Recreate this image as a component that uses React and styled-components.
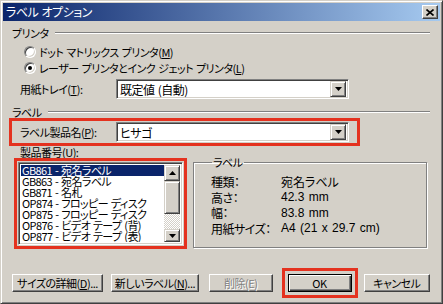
import { Fragment } from 'react';
import styled, { createGlobalStyle } from 'styled-components';

const GlobalStyle = createGlobalStyle`
  html, body {
    margin: 0;
    padding: 0;
    background: #d4d0c8;
  }
  body {
    font-family: "Noto Sans CJK JP", "Liberation Sans", sans-serif;
    font-size: 11px;
    letter-spacing: -0.5px;
    word-spacing: 1px;
    font-feature-settings: "palt";
    color: #000;
  }
`;

const RED = '#e4321f';

const Window = styled.div`
  width: 443px;
  height: 304px;
  box-sizing: border-box;
  background: #d4d0c8;
  border: 1px solid;
  border-color: #d4d0c8 #404040 #404040 #d4d0c8;
  box-shadow: inset 1px 1px #fff, inset -1px -1px #808080;
  padding: 2px;
  display: flex;
  flex-direction: column;
  overflow: hidden;
`;

const TitleBar = styled.div`
  height: 18px;
  flex: none;
  background: linear-gradient(to right, #0a246a, #a6caf0);
  display: flex;
  align-items: center;
  justify-content: space-between;
  padding: 0 2px 0 3px;
  color: #fff;
  font-size: 12px;
  line-height: 18px;
`;

const CloseButton = styled.div`
  width: 16px;
  height: 14px;
  box-sizing: border-box;
  background: #d4d0c8;
  border: 1px solid;
  border-color: #fff #404040 #404040 #fff;
  box-shadow: inset -1px -1px #808080;
  display: flex;
  align-items: center;
  justify-content: center;
`;

const Body = styled.div`
  flex: 1;
  display: flex;
  flex-direction: column;
  padding: 0 10px 0 6px;
`;

const GroupHeader = styled.div`
  display: flex;
  align-items: center;
  gap: 6px;
  height: ${(p) => p.$h || 16}px;
  margin-top: ${(p) => p.$mt || 0}px;
  padding-left: 3px;
  &::after {
    content: '';
    flex: 1;
    height: 0;
    border-top: 1px solid #808080;
    border-bottom: 1px solid #fff;
  }
`;

const RadioGroup = styled.div`
  margin-top: 3px;
`;

const RadioRow = styled.label`
  display: flex;
  align-items: center;
  gap: 3px;
  height: 16px;
  padding-left: 15px;
`;

const RadioDot = styled.span`
  width: 12px;
  height: 12px;
  box-sizing: border-box;
  border-radius: 50%;
  background: #fff;
  border: 1px solid;
  border-color: #808080 #fff #fff #808080;
  box-shadow: inset 1px 1px #404040, inset -1px -1px #d4d0c8;
  display: flex;
  align-items: center;
  justify-content: center;
  &::after {
    content: '';
    width: 4px;
    height: 4px;
    border-radius: 50%;
    background: ${(p) => (p.$checked ? '#000' : 'transparent')};
  }
`;

const FieldRow = styled.div`
  display: flex;
  align-items: center;
  height: 20px;
  margin-top: ${(p) => p.$mt || 0}px;
  padding-left: ${(p) => p.$pl || 0}px;
`;

const FieldLabel = styled.span`
  width: ${(p) => p.$w}px;
  flex: none;
`;

const Combo = styled.div`
  width: 233px;
  height: 20px;
  box-sizing: border-box;
  background: #fff;
  border: 1px solid;
  border-color: #808080 #fff #fff #808080;
  box-shadow: inset 1px 1px #404040, inset -1px -1px #d4d0c8;
  display: flex;
  align-items: center;
  padding: 2px 2px 2px 3px;
  font-size: 12px;
`;

const ComboText = styled.span`
  flex: 1;
`;

const ArrowButton = styled.div`
  width: 16px;
  height: ${(p) => p.$h || 16}px;
  box-sizing: border-box;
  background: #d4d0c8;
  border: 1px solid;
  border-color: #d4d0c8 #404040 #404040 #d4d0c8;
  box-shadow: inset 1px 1px #fff, inset -1px -1px #808080;
  display: flex;
  align-items: center;
  justify-content: center;
  flex: none;
`;

const Highlight = styled.div`
  border: 3px solid ${RED};
  padding: ${(p) => p.$pad || '1px 8px 1px 6px'};
  margin-left: ${(p) => p.$ml || 0}px;
  align-self: flex-start;
  box-sizing: border-box;
`;

const LowerRow = styled.div`
  display: flex;
  align-items: flex-start;
  gap: 6px;
`;

const LeftColumn = styled.div`
  display: flex;
  flex-direction: column;
  padding-left: 5px;
`;

const SmallLabel = styled.div`
  height: 12px;
  line-height: 12px;
  padding-left: 6px;
`;

const ListBox = styled.div`
  width: 165px;
  height: 83px;
  box-sizing: border-box;
  background: #fff;
  border: 1px solid;
  border-color: #808080 #fff #fff #808080;
  box-shadow: inset 1px 1px #404040, inset -1px -1px #d4d0c8;
  display: flex;
  padding: 2px;
  overflow: hidden;
`;

const Items = styled.div`
  flex: 1;
  display: flex;
  flex-direction: column;
  overflow: hidden;
`;

const Item = styled.div`
  height: 11px;
  line-height: 11px;
  font-size: 11px;
  letter-spacing: -0.6px;
  white-space: nowrap;
  padding-left: 1px;
  background: ${(p) => (p.$selected ? '#0a246a' : 'transparent')};
  color: ${(p) => (p.$selected ? '#fff' : '#000')};
`;

const ScrollBar = styled.div`
  width: 16px;
  flex: none;
  display: flex;
  flex-direction: column;
`;

const Thumb = styled.div`
  height: 33px;
  box-sizing: border-box;
  background: #d4d0c8;
  border: 1px solid;
  border-color: #d4d0c8 #404040 #404040 #d4d0c8;
  box-shadow: inset 1px 1px #fff, inset -1px -1px #808080;
`;

const Track = styled.div`
  flex: 1;
  background-color: #fff;
  background-image: conic-gradient(#d4d0c8 25%, #fff 0 50%, #d4d0c8 0 75%, #fff 0);
  background-size: 2px 2px;
`;

const GroupBox = styled.fieldset`
  margin: 10px 0 0 0;
  width: 234px;
  height: 92px;
  box-sizing: border-box;
  border: 1px solid #808080;
  box-shadow: inset 1px 1px #fff, 1px 1px #fff;
  padding: 6px 0 0 17px;
  legend {
    padding: 0 1px;
    margin-left: 1px;
    line-height: 12px;
  }
`;

const InfoGrid = styled.div`
  display: grid;
  grid-template-columns: 70px auto;
  grid-auto-rows: 15.5px;
  align-items: center;
  font-size: 12px;
`;

const Value = styled.span`
  font-family: "Liberation Sans", "Noto Sans CJK JP", sans-serif;
  letter-spacing: 0;
`;

const ButtonRow = styled.div`
  display: flex;
  align-items: center;
  margin-top: auto;
  margin-bottom: 4px;
  padding-left: 3px;
  height: 29px;
`;

const Button = styled.div`
  width: ${(p) => p.$w}px;
  height: 18px;
  box-sizing: border-box;
  margin-left: ${(p) => p.$ml || 0}px;
  background: #d4d0c8;
  border: 1px solid;
  border-color: ${(p) => (p.$default ? '#000' : '#fff #404040 #404040 #fff')};
  box-shadow: ${(p) =>
    p.$default
      ? 'inset 1px 1px #fff, inset -1px -1px #404040, inset -2px -2px #808080'
      : 'inset -1px -1px #808080'};
  display: flex;
  align-items: center;
  justify-content: center;
  white-space: nowrap;
  color: ${(p) => (p.$disabled ? '#808080' : '#000')};
  text-shadow: ${(p) => (p.$disabled ? '1px 1px #fff' : 'none')};
`;

const DownArrow = () => (
  <svg width="7" height="4" viewBox="0 0 7 4">
    <path d="M0 0h7L3.5 4z" fill="#000" />
  </svg>
);

const UpArrow = () => (
  <svg width="7" height="4" viewBox="0 0 7 4">
    <path d="M0 4h7L3.5 0z" fill="#000" />
  </svg>
);

const items = [
  'GB861 - 宛名ラベル',
  'GB863 - 宛名ラベル',
  'GB871 - 名札',
  'OP874 - フロッピー ディスク',
  'OP875 - フロッピー ディスク',
  'OP876 - ビデオ テープ (背)',
  'OP877 - ビデオ テープ (表)',
];

const info = [
  ['種類：', '宛名ラベル'],
  ['高さ：', '42.3 mm'],
  ['幅：', '83.8 mm'],
  ['用紙サイズ：', 'A4 (21 x 29.7 cm)'],
];

export default function App() {
  return (
    <>
      <GlobalStyle />
      <Window>
        <TitleBar>
          <span>ラベル オプション</span>
          <CloseButton>
            <svg width="8" height="7" viewBox="0 0 8 7">
              <path d="M0.5 0.5L7.5 6.5M7.5 0.5L0.5 6.5" stroke="#000" strokeWidth="1.6" />
            </svg>
          </CloseButton>
        </TitleBar>
        <Body>
          <GroupHeader $mt={4}>プリンタ</GroupHeader>
          <RadioGroup>
            <RadioRow>
              <RadioDot />
              <span>ドット マトリックス プリンタ(<u>M</u>)</span>
            </RadioRow>
            <RadioRow>
              <RadioDot $checked />
              <span>レーザー プリンタとインク ジェット プリンタ(<u>L</u>)</span>
            </RadioRow>
          </RadioGroup>
          <FieldRow $mt={3} $pl={11}>
            <FieldLabel $w={96}>用紙トレイ(<u>T</u>):</FieldLabel>
            <Combo>
              <ComboText>既定値 (自動)</ComboText>
              <ArrowButton><DownArrow /></ArrowButton>
            </Combo>
          </FieldRow>
          <GroupHeader $mt={7} $h={12}>ラベル</GroupHeader>
          <Highlight>
            <FieldRow $pl={2}>
              <FieldLabel $w={96}>ラベル製品名(<u>P</u>):</FieldLabel>
              <Combo>
                <ComboText>ヒサゴ</ComboText>
                <ArrowButton><DownArrow /></ArrowButton>
              </Combo>
            </FieldRow>
          </Highlight>
          <LowerRow>
            <LeftColumn>
              <SmallLabel>製品番号(<u>U</u>):</SmallLabel>
              <Highlight $pad="1px">
                <ListBox>
                  <Items>
                    {items.map((t, i) => (
                      <Item key={t} $selected={i === 0}>{t}</Item>
                    ))}
                  </Items>
                  <ScrollBar>
                    <ArrowButton><UpArrow /></ArrowButton>
                    <Thumb />
                    <Track />
                    <ArrowButton $h={13}><DownArrow /></ArrowButton>
                  </ScrollBar>
                </ListBox>
              </Highlight>
            </LeftColumn>
            <GroupBox>
              <legend>ラベル</legend>
              <InfoGrid>
                {info.map(([k, v]) => (
                  <Fragment key={k}>
                    <span>{k}</span>
                    <Value>{v}</Value>
                  </Fragment>
                ))}
              </InfoGrid>
            </GroupBox>
          </LowerRow>
          <ButtonRow>
            <Button $w={93}>サイズの詳細(<u>D</u>)...</Button>
            <Button $w={90} $ml={8}>新しいラベル(<u>N</u>)...</Button>
            <Button $w={65} $ml={10} $disabled>削除(E)</Button>
            <Highlight $pad="3px" $ml={9}>
              <Button $w={64} $default>OK</Button>
            </Highlight>
            <Button $w={68} $ml={6}>キャンセル</Button>
          </ButtonRow>
        </Body>
      </Window>
    </>
  );
}
